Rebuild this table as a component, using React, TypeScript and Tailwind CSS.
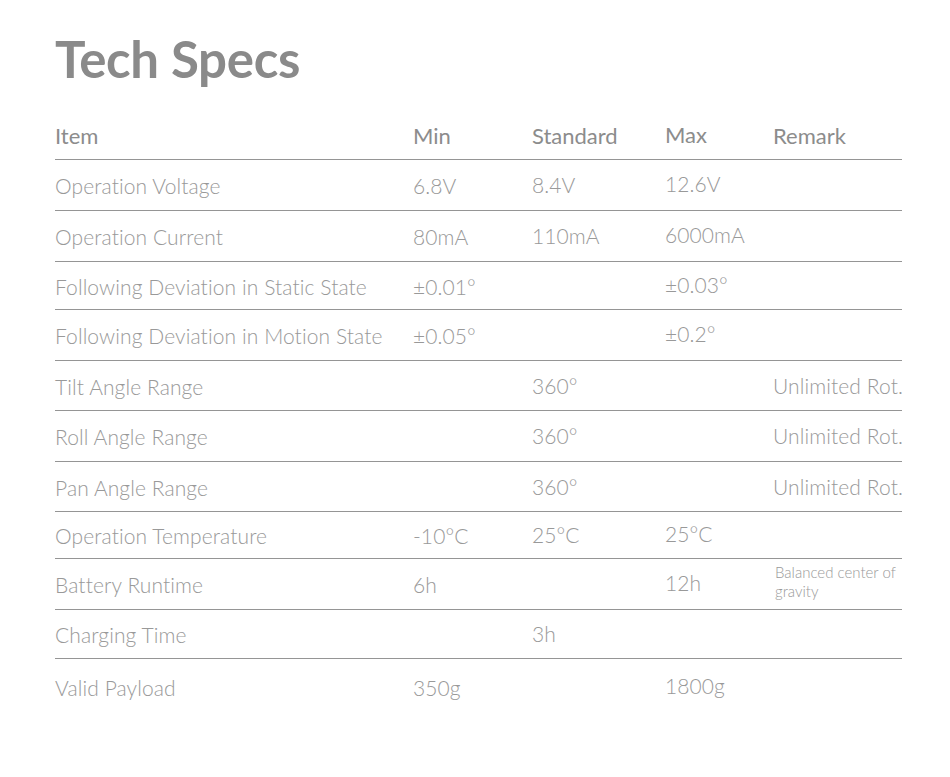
const rows: { item: string; min?: string; std?: string; max?: string; remark?: string; small?: boolean; h: string }[] = [
  { item: "Operation Voltage", min: "6.8V", std: "8.4V", max: "12.6V", h: "h-[51px]" },
  { item: "Operation Current", min: "80mA", std: "110mA", max: "6000mA", h: "h-[51px]" },
  { item: "Following Deviation in Static State", min: "±0.01°", max: "±0.03°", h: "h-[48px]" },
  { item: "Following Deviation in Motion State", min: "±0.05°", max: "±0.2°", h: "h-[51px]" },
  { item: "Tilt Angle Range", std: "360°", remark: "Unlimited Rot.", h: "h-[50px]" },
  { item: "Roll Angle Range", std: "360°", remark: "Unlimited Rot.", h: "h-[51px]" },
  { item: "Pan Angle Range", std: "360°", remark: "Unlimited Rot.", h: "h-[50px]" },
  { item: "Operation Temperature", min: "-10°C", std: "25°C", max: "25°C", h: "h-[47px]" },
  { item: "Battery Runtime", min: "6h", max: "12h", remark: "Balanced center of gravity", small: true, h: "h-[51px]" },
  { item: "Charging Time", std: "3h", h: "h-[49px]" },
];

const cols = "grid grid-cols-[358px_119px_133px_108px_129px]";

export default function App() {
  return (
    <div className="min-h-[777px] bg-white font-['Lato',sans-serif] pl-[55px] pt-[27px]">
      <h1 className="text-[51px] font-bold text-[#8a8a8a] leading-[64px] tracking-[-0.3px]">Tech Specs</h1>
      <div className="w-[847px] mt-[21px]">
        <div className={`${cols} h-[48px] items-center border-b border-[#959595] text-[22px] text-[#8c8c8c] font-normal`}>
          <span>Item</span>
          <span>Min</span>
          <span>Standard</span>
          <span className="-mt-[3px]">Max</span>
          <span>Remark</span>
        </div>
        {rows.map((r) => (
          <div key={r.item} className={`${cols} ${r.h} items-center border-b border-[#959595] text-[21px] tracking-[0.1px] text-[#999] font-light pt-[2px]`}>
            <span className="whitespace-nowrap">{r.item}</span>
            <span>{r.min}</span>
            <span className="-mt-[2px]">{r.std}</span>
            <span className="-mt-[4px]">{r.max}</span>
            {r.small ? (
              <span className="text-[15px] leading-[19px] tracking-normal -mt-[6px] ml-[2px]">{r.remark}</span>
            ) : (
              <span className="whitespace-nowrap -mt-[2px]">{r.remark}</span>
            )}
          </div>
        ))}
        <div className={`${cols} h-[55px] items-center text-[21px] tracking-[0.1px] text-[#999] font-light pt-[2px]`}>
          <span>Valid Payload</span>
          <span>350g</span>
          <span></span>
          <span className="-mt-[4px]">1800g</span>
          <span></span>
        </div>
      </div>
    </div>
  );
}
